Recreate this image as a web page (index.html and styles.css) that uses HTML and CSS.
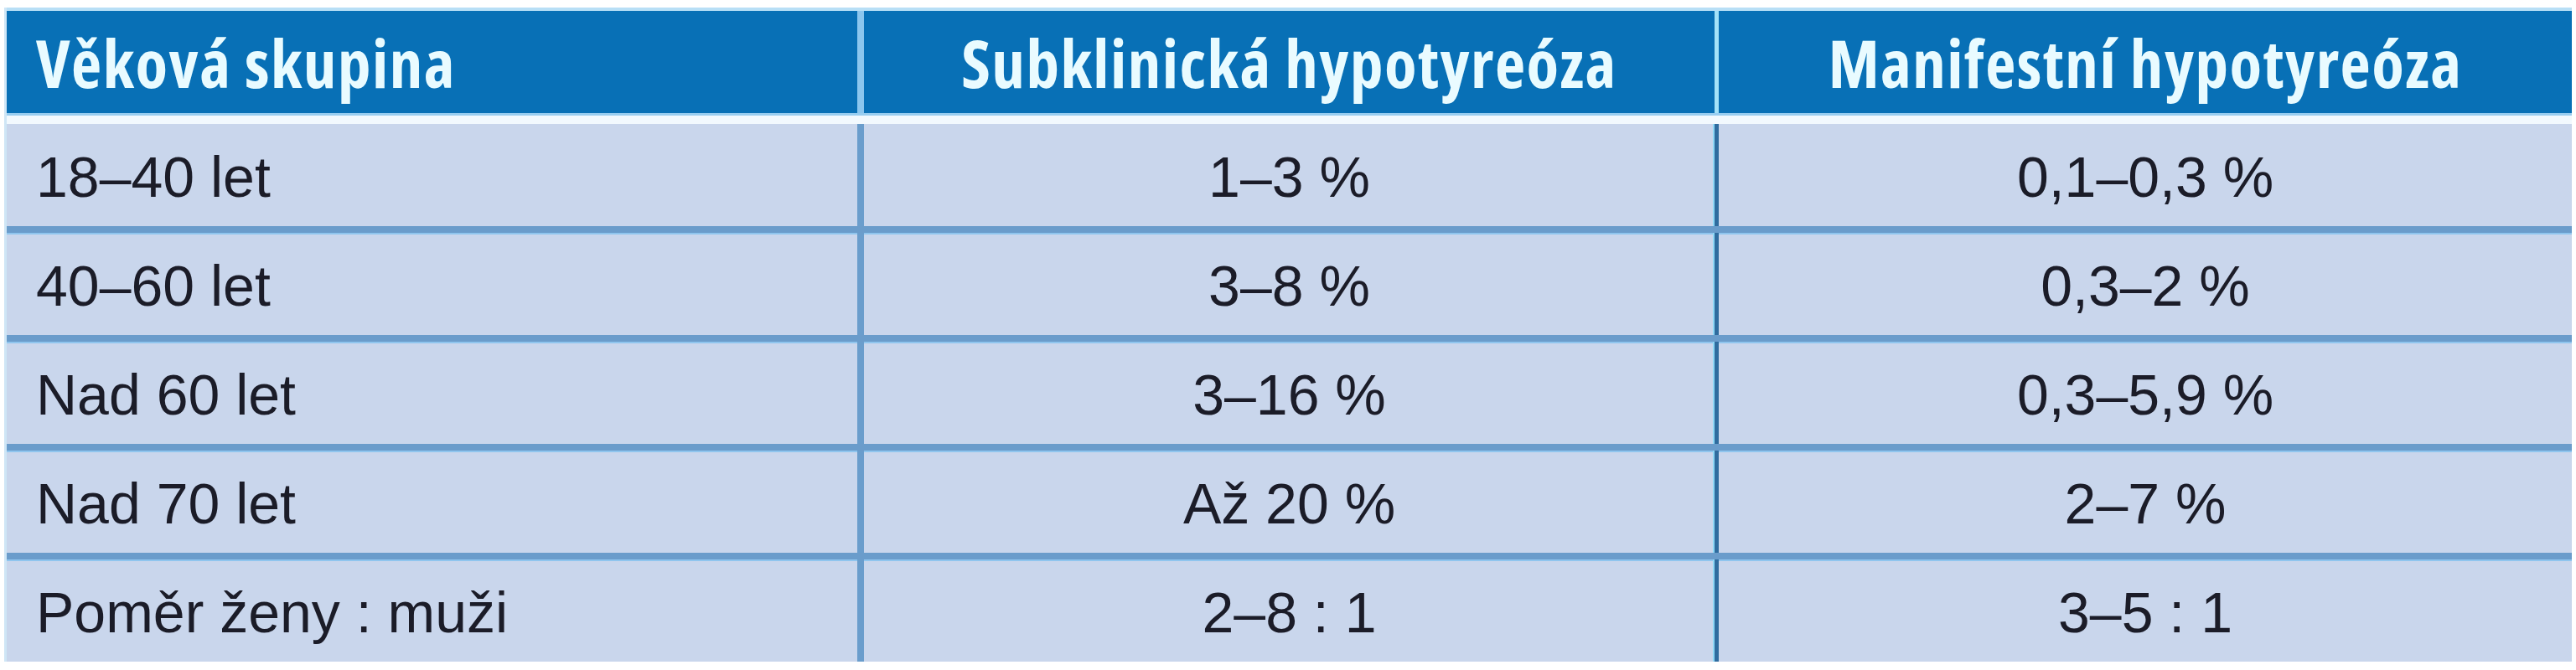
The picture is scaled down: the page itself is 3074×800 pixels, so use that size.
FILE: index.html
```html
<!DOCTYPE html>
<html lang="cs">
<head>
<meta charset="utf-8">
<title>Prevalence hypotyreózy</title>
<link rel="stylesheet" href="styles.css">
</head>
<body>
<div class="page">
  <div class="table">
    <div class="row head">
      <div class="cell c1">Věková skupina</div>
      <div class="cell c2">Subklinická hypotyreóza</div>
      <div class="cell c3">Manifestní hypotyreóza</div>
    </div>
    <div class="gap"></div>
    <div class="row body first">
      <div class="cell c1">18–40 let</div>
      <div class="cell c2">1–3 %</div>
      <div class="cell c3">0,1–0,3 %</div>
    </div>
    <div class="row body">
      <div class="cell c1">40–60 let</div>
      <div class="cell c2">3–8 %</div>
      <div class="cell c3">0,3–2 %</div>
    </div>
    <div class="row body">
      <div class="cell c1">Nad 60 let</div>
      <div class="cell c2">3–16 %</div>
      <div class="cell c3">0,3–5,9 %</div>
    </div>
    <div class="row body">
      <div class="cell c1">Nad 70 let</div>
      <div class="cell c2">Až 20 %</div>
      <div class="cell c3">2–7 %</div>
    </div>
    <div class="row body">
      <div class="cell c1">Poměr ženy : muži</div>
      <div class="cell c2">2–8 : 1</div>
      <div class="cell c3">3–5 : 1</div>
    </div>
  </div>
</div>
</body>
</html>
```
FILE: styles.css
```css
html, body {
  margin: 0;
  padding: 0;
  background: #ffffff;
}

.page {
  width: 3074px;
  height: 800px;
  box-sizing: border-box;
  padding: 9px 5px 0 5px;
  background: #ffffff;
}

.table {
  width: 3064px;
  border-left: 3px solid #cfe6f6;
  box-sizing: border-box;
  background: #eaf2fb;
}

.row {
  display: grid;
  grid-template-columns: 1023px 1020px 1018px;
  box-sizing: border-box;
}

.cell {
  display: flex;
  align-items: center;
  justify-content: center;
  box-sizing: border-box;
  white-space: nowrap;
}

.cell.c1 {
  justify-content: flex-start;
  padding-left: 35px;
}

/* header */
.head {
  height: 126px;
  border-top: 4px solid #b8dff6;
  background: #0870b6;
  color: #e9fbff;
  font-family: "Open Sans", "Liberation Sans", sans-serif;
  font-stretch: 75%;
  font-weight: 700;
  font-size: 79px;
  letter-spacing: 1.5px;
}

.head .c1 {
  border-right: 8px solid #8cc6ee;
}

.head .c2 {
  border-right: 5px solid #a4e2f8;
}

.gap {
  height: 13px;
  border-top: 3px solid #98cdf0;
  box-sizing: border-box;
  background: #f2f9fe;
}

/* body rows */
.body {
  background: #c9d6ec;
  color: #1b1c28;
  font-family: "Liberation Sans", Arial, sans-serif;
  font-size: 68px;
  border-top: 8px solid #6a9ccb;
  box-shadow: inset 0 2px 0 #8fc5ee;
  height: 130px;
}

.body .cell {
  padding-top: 4px;
}

.body.first {
  border-top: 0;
  box-shadow: none;
  height: 122px;
}

.body .c1 {
  border-right: 8px solid #6a9dcc;
}

.body .c2 {
  border-right: 5px solid #2f6c9f;
  box-shadow: inset -2px 0 0 #8fd8f6;
}
```
